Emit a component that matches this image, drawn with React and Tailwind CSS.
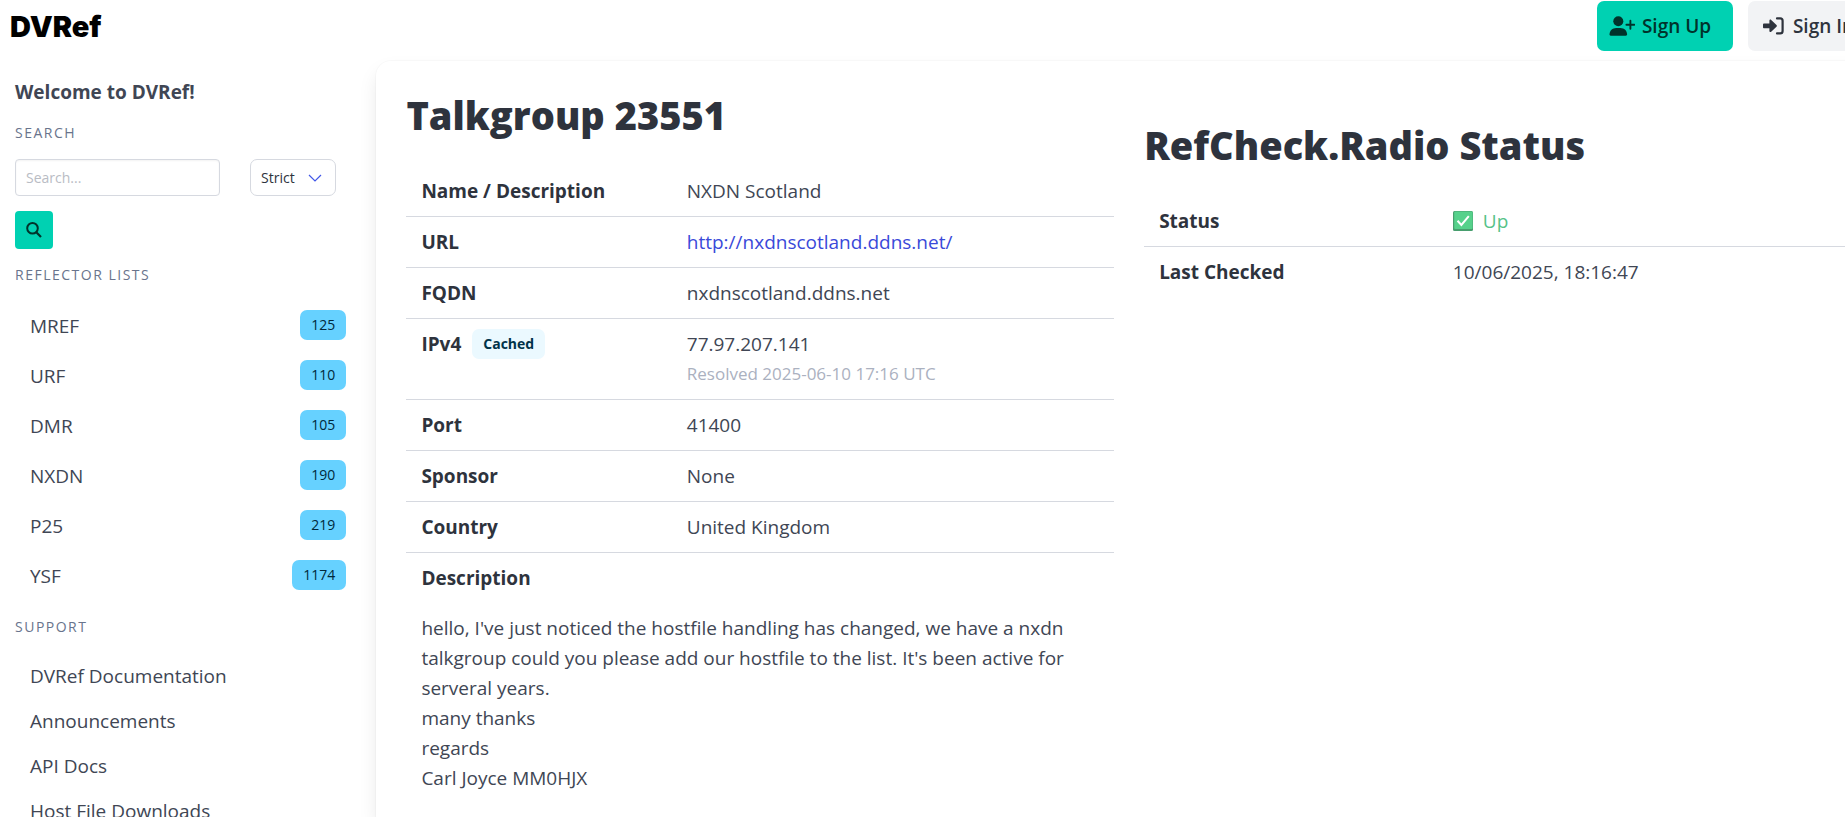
const reflectors = [
  ["MREF", 125],
  ["URF", 110],
  ["DMR", 105],
  ["NXDN", 190],
  ["P25", 219],
  ["YSF", 1174],
];

const support = ["DVRef Documentation", "Announcements", "API Docs", "Host File Downloads"];

function UserPlusIcon() {
  return (
    <svg className="h-5 w-[26px]" viewBox="0 0 26 20" fill="currentColor" aria-hidden="true">
      <circle cx="9.3" cy="5.2" r="5" />
      <path d="M0.5 18.6C0.5 14.8 3.4 12 7.2 12h4.2c3.8 0 6.7 2.8 6.7 6.6 0 .7-.5 1.2-1.2 1.2H1.7c-.7 0-1.2-.5-1.2-1.2z" />
      <path d="M21.4 4.7v8M17.4 8.7h8" fill="none" stroke="currentColor" strokeWidth="1.9" strokeLinecap="round" />
    </svg>
  );
}

function SignInIcon() {
  return (
    <svg className="h-[18px] w-[21px]" viewBox="0 0 21 18" aria-hidden="true">
      <path
        d="M0 7.5C0 6.9.5 6.4 1.1 6.4h5.3V3.7c0-1 1.1-1.4 1.8-.8l5.3 5.1c.5.5.5 1.2 0 1.7l-5.3 5.1c-.7.6-1.8.2-1.8-.8v-2.7H1.1C.5 11.3 0 10.8 0 10.2z"
        fill="currentColor"
      />
      <path
        d="M14 1.4h3.2c1.3 0 2.4 1 2.4 2.4v10.2c0 1.3-1 2.4-2.4 2.4H14"
        fill="none"
        stroke="currentColor"
        strokeWidth="2.2"
        strokeLinecap="round"
      />
    </svg>
  );
}

function SearchIcon() {
  return (
    <svg className="size-4" viewBox="0 0 16 16" fill="none" stroke="currentColor" aria-hidden="true">
      <circle cx="6.5" cy="6.3" r="5.3" strokeWidth="2" />
      <path d="M10.3 10.2l4.7 4.8" strokeWidth="2.2" />
    </svg>
  );
}

function CheckMark() {
  return (
    <svg className="size-5" viewBox="0 0 20 20" aria-hidden="true">
      <rect width="20" height="20" rx="1.5" fill="#479e6e" />
      <rect x="1.2" y="0.4" width="18.4" height="17.6" rx="1" fill="#56d18b" />
      <path d="M4.5 9.8l3.9 4.2L15.8 5.2" fill="none" stroke="#fff" strokeWidth="2" />
    </svg>
  );
}

function MenuLabel({ children }) {
  return (
    <h2 className="text-[14px] leading-[21px] tracking-[1.5px] uppercase text-[#69748c]">{children}</h2>
  );
}

function Row({ label, tag, children }) {
  return (
    <tr className="border-b border-[#d6d9e0] last:border-b-0">
      <th scope="row" className="px-[15px] py-[10px] text-left align-top font-bold text-[#2e333d]">
        <span className="flex items-center gap-[11px]">
          {label}
          {tag}
        </span>
      </th>
      <td className="px-[15px] py-[10px] align-top">{children}</td>
    </tr>
  );
}

function Sidebar() {
  return (
    <aside className="w-1/5 shrink-0 pl-[15px] pr-[30px] pt-[16px] text-[#404654]">
      <p className="font-bold">Welcome to DVRef!</p>
      <div className="mt-[15px]">
        <MenuLabel>Search</MenuLabel>
      </div>
      <form className="mt-[16px] flex flex-wrap gap-y-[15px]">
        <input
          type="text"
          aria-label="Search"
          placeholder="Search..."
          className="h-[37px] w-[205px] rounded-[4px] border border-[#d6d9e0] px-[10px] text-[14px] text-[#2e333d] shadow-[inset_0_1px_2px_rgba(10,10,10,0.05)] placeholder:text-[#b9bcc4]"
        />
        <div className="relative ml-[30px]">
          <select
            aria-label="Match mode"
            className="h-[37px] w-[86px] appearance-none rounded-[7px] border border-[#d6d9e0] bg-white px-[10px] text-[14px] text-[#2e333d]"
          >
            <option>Strict</option>
            <option>Loose</option>
          </select>
          <svg
            className="pointer-events-none absolute top-[15px] right-[14px] h-2 w-[14px]"
            viewBox="0 0 14 8"
            fill="none"
            stroke="#4258e8"
            aria-hidden="true"
          >
            <path d="M1 1l6 6 6-6" strokeWidth="1.2" />
          </svg>
        </div>
        <div className="w-full">
          <button
            type="button"
            aria-label="Run search"
            className="flex size-[38px] items-center justify-center rounded-[4px] bg-[#00d1b2] text-[#00332b]"
          >
            <SearchIcon />
          </button>
        </div>
      </form>
      <div className="mt-[15px]">
        <MenuLabel>Reflector Lists</MenuLabel>
      </div>
      <ul className="mt-[16px]">
        {reflectors.map(([name, count]) => (
          <li key={name}>
            <a href="#" className="flex h-[50px] items-center justify-between pl-[15px]">
              {name}
              <span className="mb-[3px] flex h-[30px] items-center rounded-[7px] bg-[#66d1ff] px-[11px] text-[14px] text-[#00293b]">
                {count}
              </span>
            </a>
          </li>
        ))}
      </ul>
      <div className="mt-[15px]">
        <MenuLabel>Support</MenuLabel>
      </div>
      <ul className="mt-[16px]">
        {support.map((name) => (
          <li key={name}>
            <a href="#" className="flex h-[45px] items-center pl-[15px]">
              {name}
            </a>
          </li>
        ))}
      </ul>
    </aside>
  );
}

export default function App() {
  return (
    <div className="h-screen overflow-hidden bg-white font-['Open_Sans','Noto_Sans',sans-serif] text-[19px] leading-[30px] text-[#404654]">
      <div className="flex h-full w-[102%] flex-col">
        <header className="flex h-[61px] shrink-0 items-start justify-between pl-[10px] pr-[15px] pt-px">
          <a href="#" className="font-[Inter,sans-serif] text-[29px] leading-[52px] font-black text-black">
            DVRef
          </a>
          <div className="flex gap-[15px] font-semibold">
            <a href="#" className="flex h-[50px] w-[136px] items-center gap-[7px] rounded-[7px] bg-[#00d1b2] pl-[12px] whitespace-nowrap text-[#00332b]">
              <UserPlusIcon />
              Sign Up
            </a>
            <a href="#" className="flex h-[50px] w-[119px] items-center gap-[9px] rounded-[7px] bg-[#f2f3f5] pl-[15px] whitespace-nowrap text-[#2e333d]">
              <SignInIcon />
              Sign In
            </a>
          </div>
        </header>
        <div className="flex min-h-0 flex-1">
          <Sidebar />
          <main className="grid min-h-full flex-1 grid-cols-2 items-start gap-[30px] rounded-tl-[15px] bg-white p-[30px] shadow-[0_10px_20px_-2px_rgba(10,10,10,0.1),0_0_0_1px_rgba(10,10,10,0.02)]">
            <section>
              <h1 className="text-[38px] leading-[49px] font-extrabold text-[#2e333d]">Talkgroup 23551</h1>
              <table className="mt-[26px] w-full table-fixed">
                <colgroup>
                  <col className="w-[37.5%]" />
                  <col />
                </colgroup>
                <tbody>
                  <Row label="Name / Description">NXDN Scotland</Row>
                  <Row label="URL">
                    <a href="#" className="text-[#3a49d9]">http://nxdnscotland.ddns.net/</a>
                  </Row>
                  <Row label="FQDN">nxdnscotland.ddns.net</Row>
                  <Row
                    label="IPv4"
                    tag={
                      <span className="flex h-[30px] items-center rounded-[7px] bg-[#ebf9ff] px-[11px] text-[14px] text-[#00334a]">
                        Cached
                      </span>
                    }
                  >
                    77.97.207.141
                    <span className="block text-[17px] text-[#abb1bf]">Resolved 2025-06-10 17:16 UTC</span>
                  </Row>
                  <Row label="Port">41400</Row>
                  <Row label="Sponsor">None</Row>
                  <Row label="Country">United Kingdom</Row>
                  <tr>
                    <td colSpan={2} className="px-[15px] py-[10px]">
                      <p className="mb-5 font-bold text-[#2e333d]">Description</p>
                      <p>
                        hello, I've just noticed the hostfile handling has changed, we have a nxdn talkgroup could you
                        please add our hostfile to the list. It's been active for serveral years.
                        <br />
                        many thanks
                        <br />
                        regards
                        <br />
                        Carl Joyce MM0HJX
                      </p>
                    </td>
                  </tr>
                </tbody>
              </table>
            </section>
            <section className="mt-[30px]">
              <h2 className="text-[38px] leading-[49px] font-extrabold text-[#2e333d]">RefCheck.Radio Status</h2>
              <table className="mt-[26px] w-full table-fixed">
                <colgroup>
                  <col className="w-[41.5%]" />
                  <col />
                </colgroup>
                <tbody>
                  <Row label="Status">
                    <span className="flex items-center gap-[10px] text-[#56c288]">
                      <CheckMark />
                      Up
                    </span>
                  </Row>
                  <Row label="Last Checked">10/06/2025, 18:16:47</Row>
                </tbody>
              </table>
            </section>
          </main>
        </div>
      </div>
    </div>
  );
}
